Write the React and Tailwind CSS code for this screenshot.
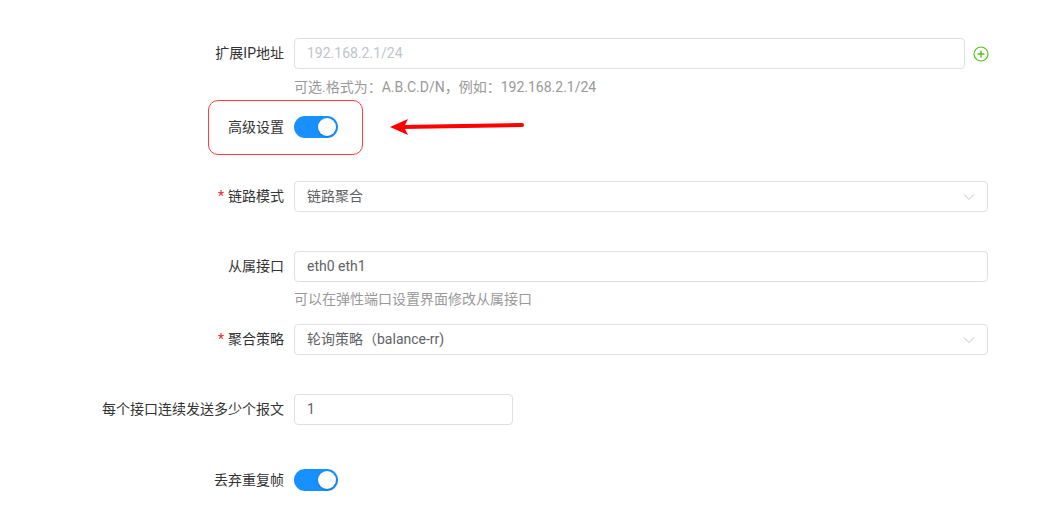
import React from 'react';

const Label = ({ children, required = false }) => (
  <div className="w-[294px] shrink-0 pr-[10px] text-right text-[14px] text-[#333] leading-[31px]">
    {required && <span className="mr-[4px] text-[#f5222d]">*</span>}
    {children}
  </div>
);

const Input = ({ value, placeholder, className = '' }) => (
  <div
    className={`h-[31px] rounded-[4px] border border-[#dcdfe6] bg-white px-[12px] text-[14px] leading-[29px] ${
      value ? 'text-[#606266]' : 'text-[#c0c4cc]'
    } ${className}`}
  >
    {value || placeholder}
  </div>
);

const Select = ({ value }) => (
  <div className="flex h-[31px] w-[694px] items-center justify-between rounded-[4px] border border-[#dcdfe6] bg-white pl-[12px] pr-[12px] text-[14px] text-[#606266]">
    <span>{value}</span>
    <svg width="12" height="8" viewBox="0 0 12 8" fill="none">
      <path d="M1 1.5l5 5 5-5" stroke="#c0c4cc" strokeWidth="1" />
    </svg>
  </div>
);

const Switch = () => (
  <div className="relative h-[22px] w-[44px] rounded-full bg-[#1890ff]">
    <div className="absolute right-[2px] top-[2px] h-[18px] w-[18px] rounded-full bg-white shadow-[0_1px_2px_rgba(0,0,0,0.2)]" />
  </div>
);

const Help = ({ children }) => (
  <div className="ml-[294px] text-[14px] leading-[20px] text-[#999]">{children}</div>
);

export default function App() {
  return (
    <div
      className="relative h-[525px] w-[1064px] overflow-hidden bg-white"
      style={{ fontFamily: 'Roboto, "Noto Sans CJK SC", sans-serif' }}
    >
      <div className="pt-[38px]">
        {/* 扩展IP */}
        <div className="flex items-center">
          <Label>扩展IP地址</Label>
          <Input placeholder="192.168.2.1/24" className="w-[671px]" />
          <svg className="ml-[8px]" width="16" height="16" viewBox="0 0 16 16" fill="none">
            <circle cx="8" cy="8" r="7" stroke="#52c41a" strokeWidth="1.2" />
            <path d="M8 4.5v7M4.5 8h7" stroke="#52c41a" strokeWidth="1.4" />
          </svg>
        </div>
        <div className="pt-[8px]">
          <Help>可选.格式为：A.B.C.D/N，例如：192.168.2.1/24</Help>
        </div>

        {/* 高级设置 */}
        <div className="relative mt-[14px] flex h-[32px] items-center">
          <Label>高级设置</Label>
          <Switch />
          <div className="absolute left-[208px] top-[-11px] h-[55px] w-[155px] rounded-[10px] border border-[#ff3b3b]" />
          <svg className="absolute left-[388px] top-[6px]" width="138" height="20" viewBox="0 0 138 20" fill="none">
            <path d="M14 10 L134 8" stroke="#f00" strokeWidth="4" strokeLinecap="round" />
            <path d="M2 10 L20 2 L16 10 L20 18 Z" fill="#f00" />
          </svg>
        </div>

        {/* 链路模式 */}
        <div className="mt-[38px] flex items-center">
          <Label required>链路模式</Label>
          <Select value="链路聚合" />
        </div>

        {/* 从属接口 */}
        <div className="mt-[39px] flex items-center">
          <Label>从属接口</Label>
          <Input value="eth0 eth1" className="w-[694px]" />
        </div>
        <div className="pt-[7px]">
          <Help>可以在弹性端口设置界面修改从属接口</Help>
        </div>

        {/* 聚合策略 */}
        <div className="mt-[15px] flex items-center">
          <Label required>聚合策略</Label>
          <Select value="轮询策略（balance-rr)" />
        </div>

        {/* 报文 */}
        <div className="mt-[39px] flex items-center">
          <Label>每个接口连续发送多少个报文</Label>
          <Input value="1" className="w-[219px]" />
        </div>

        {/* 丢弃重复帧 */}
        <div className="mt-[39px] flex h-[32px] items-center">
          <Label>丢弃重复帧</Label>
          <Switch />
        </div>
      </div>
    </div>
  );
}
